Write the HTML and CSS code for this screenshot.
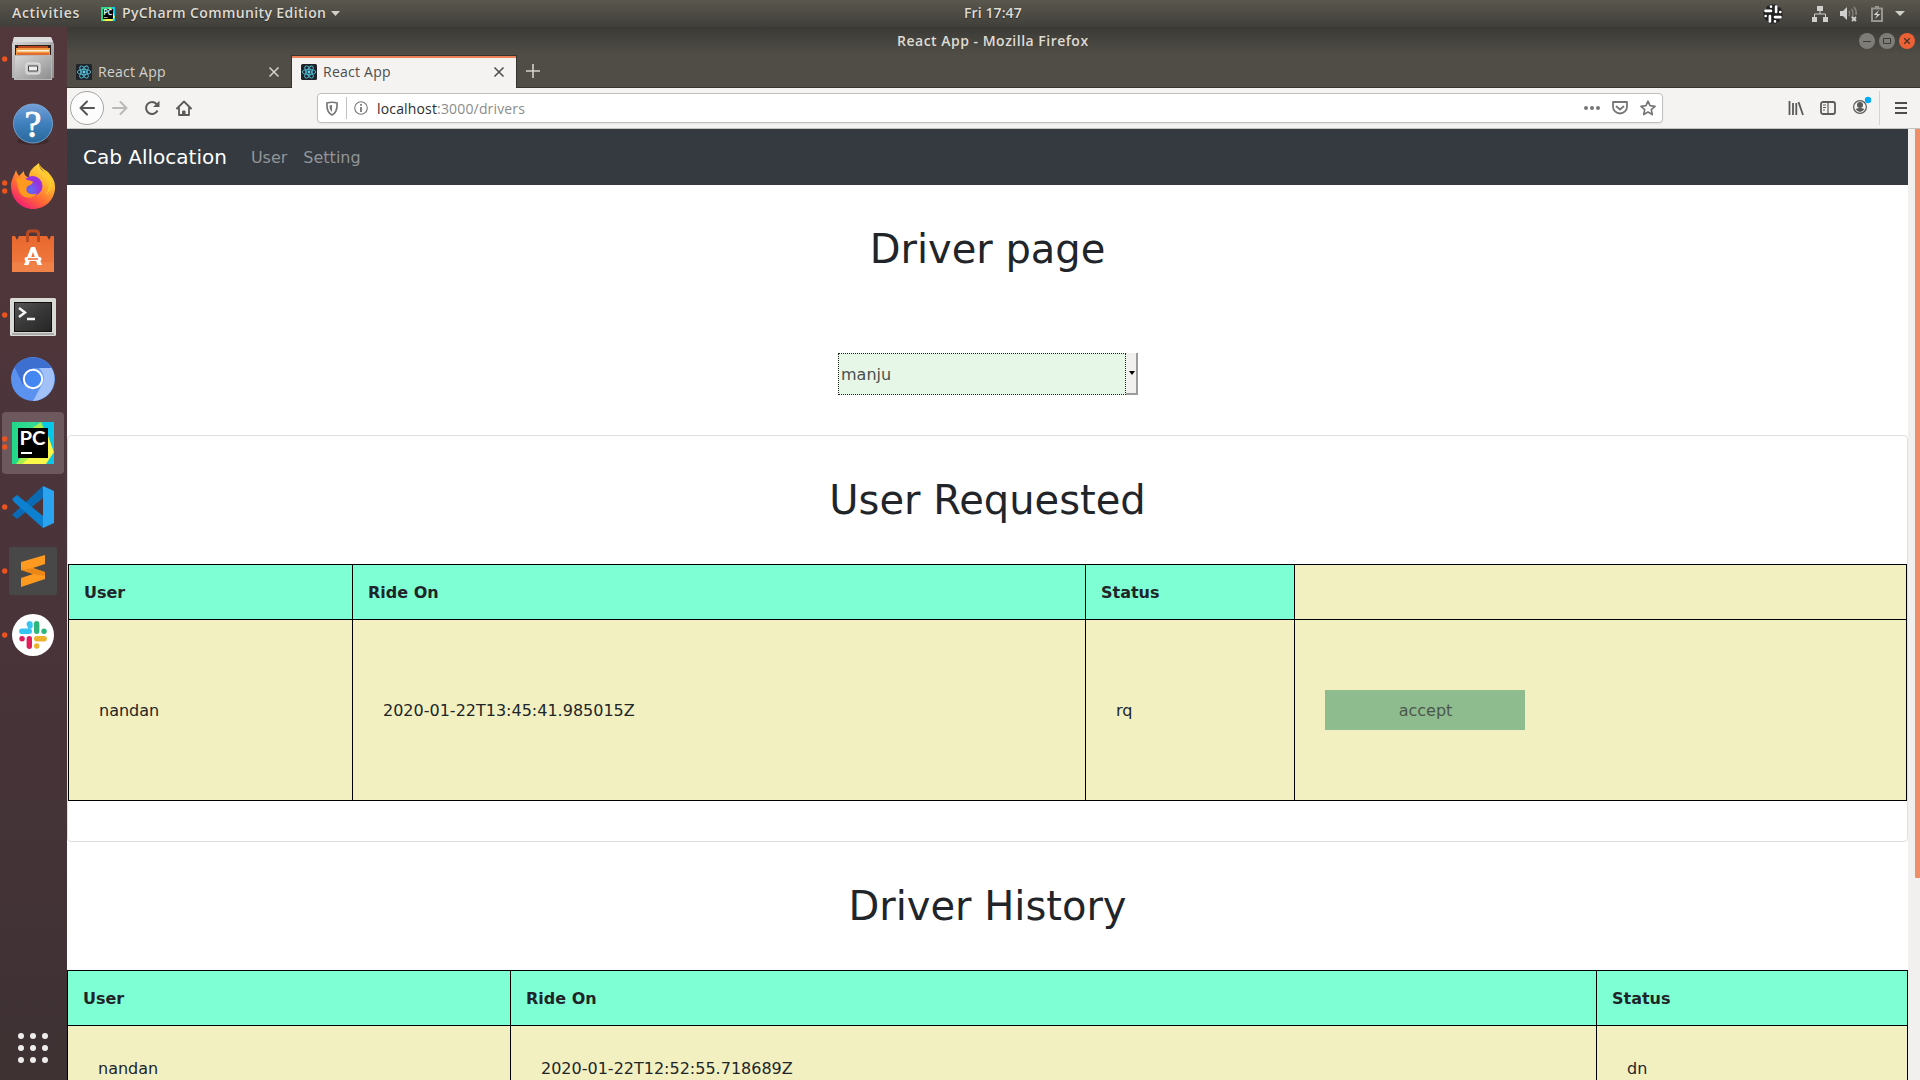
FILE: index.html
```html
<!DOCTYPE html>
<html lang="en">
<head>
<meta charset="utf-8">
<title>React App</title>
<link rel="stylesheet" href="styles.css">
</head>
<body>
<svg class="defs" width="0" height="0" aria-hidden="true">
  <defs>
    <linearGradient id="steel" x1="0" y1="0" x2="1" y2="1"><stop offset="0" stop-color="#d8d8d8"/><stop offset="1" stop-color="#8d8d8d"/></linearGradient>
    <linearGradient id="blue" x1="0" y1="0" x2="0" y2="1"><stop offset="0" stop-color="#74a0d8"/><stop offset=".5" stop-color="#3f80bd"/><stop offset="1" stop-color="#2a699b"/></linearGradient>
    <linearGradient id="fox" x1=".9" y1="0" x2=".2" y2="1"><stop offset="0" stop-color="#fff44f"/><stop offset=".35" stop-color="#ffb52e"/><stop offset=".65" stop-color="#ff6a35"/><stop offset="1" stop-color="#f0127c"/></linearGradient>
    <radialGradient id="globe" cx=".4" cy=".7"><stop offset="0" stop-color="#5b6df0"/><stop offset="1" stop-color="#9a32e0"/></radialGradient>
    <linearGradient id="bag" x1="0" y1="0" x2="0" y2="1"><stop offset="0" stop-color="#e9682d"/><stop offset="1" stop-color="#f07c43"/></linearGradient>
    <linearGradient id="term" x1="0" y1="0" x2="1" y2="1"><stop offset="0" stop-color="#555"/><stop offset=".5" stop-color="#383838"/><stop offset="1" stop-color="#262626"/></linearGradient>
    <linearGradient id="py" x1="0" y1="0" x2="1" y2="0"><stop offset="0" stop-color="#21d789"/><stop offset=".5" stop-color="#35dc92"/><stop offset="1" stop-color="#07c3f2"/></linearGradient>
    <symbol id="pycharm" viewBox="0 0 42 42">
      <path fill="url(#py)" d="M0 0h42v42H0z"/><path fill="#a9ee4e" d="M16 9 29 0l4 10zM4 42l8-10h25L18 42z"/><path fill="#fcf84a" d="m36 12 6 18-8 12H10l7-6z"/><path fill="#07c8e8" d="M31 0h11v30z"/>
      <path d="M6 6h30v30H6z"/><path fill="#fff" d="M9 30h11v2H9z"/>
      <text x="7.500" y="23" font-family="Lato, sans-serif" font-weight="700" font-size="19.500" fill="#fff" textLength="26" lengthAdjust="spacingAndGlyphs">PC</text>
    </symbol>
    <symbol id="react" viewBox="0 0 16 16">
      <rect width="16" height="16" rx="1.5" fill="#20242a"/>
      <g fill="none" stroke="#4fb9d2" stroke-width=".9"><ellipse cx="8" cy="8" rx="6.8" ry="2.6"/><ellipse cx="8" cy="8" rx="6.8" ry="2.6" transform="rotate(60 8 8)"/><ellipse cx="8" cy="8" rx="6.8" ry="2.6" transform="rotate(120 8 8)"/></g><circle cx="8" cy="8" r="1.4" fill="#61dafb"/>
    </symbol>
    <symbol id="x" viewBox="0 0 12 12"><path d="m1.5 1.5 9 9m0-9-9 9" stroke="currentColor" stroke-width="1.5" fill="none"/></symbol>
  </defs>
</svg>

<header class="topbar">
  <span class="top-activities">Activities</span>
  <svg class="top-app-icon" width="14" height="14"><use href="#pycharm"/></svg>
  <span class="top-app">PyCharm Community Edition</span>
  <svg class="top-caret" width="10" height="5"><path d="M0 0h9L4.500 5z" fill="#d0cfca"/></svg>
  <span class="top-clock">Fri 17:47</span>
  <div class="top-tray">
    <svg class="tray-slack" width="20" height="20" viewBox="0 0 20 20" fill="none" stroke-linecap="round"><g stroke="#222" stroke-width="4.500"><path d="M8.300 2.500V8M2.500 8h3M17.500 8.300H12M12 2.500v3M11.700 17.500V12M17.500 12h-3M2.500 11.700H8M8 17.500v-3M5.500 4h.1M16 5.500v.1M14.500 16h.1M4 14.500v.1"/></g><g stroke="#fff" stroke-width="2.600"><path d="M8 6.900H2.500M8 2.600v.1M13.100 8V2.500M17.400 8h-.1M12 13.100h5.500M12 17.400v-.1M6.900 12v5.500M2.600 12h.1"/></g></svg>
    <svg class="tray-net" width="16" height="16" viewBox="0 0 16 16"><path fill="#d0cfcb" d="M5 0h6v5H5zM0 11h5v5H0zM11 11h5v5h-5z"/><path d="M8 5v3M2.500 11V8h11v3" fill="none" stroke="#d0cfcb"/></svg>
    <svg class="tray-vol" width="18" height="16" viewBox="0 0 18 16"><path fill="#d0cfcb" d="M0 5h3l4-4v13l-4-4H0z"/><path d="M9 5q1.500 2.500 0 5M11.500 3q3 4.500 0 9M14 1q3 4 2 8" fill="none" stroke="#83827c" stroke-width="1.500"/><path d="m12 11 4 4m0-4-4 4" stroke="#d0cfcb" stroke-width="1.800"/></svg>
    <svg class="tray-bat" width="12" height="16" viewBox="0 0 12 16"><path d="M1 2.500h10V15H1zM4 1h4" fill="none" stroke="#969590" stroke-width="2"/><path fill="#d0cfcb" d="M8 4 2.500 9H6l-2 4 5.500-5H6z"/></svg>
    <svg width="10" height="5"><path d="M0 0h10L5 5z" fill="#d0cfca"/></svg>
  </div>
</header>

<div class="desktop">
  <nav class="dock">
    <svg class="dock-item" viewBox="0 0 67 64">
      <circle class="run" cx="4.700" cy="32" r="2.700"/>
      <path fill="url(#steel)" d="M14 10h37l3 7v34H12V17z"/><path fill="#dcdcdc" d="M14 10h37l2 5H13z"/><path fill="#2b2220" d="M15 18h36v12H15z"/><path fill="#b8481c" d="M18 19h30v5H18z"/><path fill="#f09a43" d="M16 21h34v8H16z"/><path fill="#fff1dc" d="M17 23h32v1.500H17z"/><path fill="#e06b2c" d="M17 26h32v2H17z"/>
      <path fill="#b8b8b8" d="M14 28h38v25H14z"/><path fill="url(#steel)" d="M15 29h36v23H15z"/><rect x="26" y="36" width="14" height="11" rx="2" fill="#c9c9c9" stroke="#e8e8e8"/><path d="M28.500 39h9v5h-9z" fill="#eee" stroke="#444"/>
    </svg>
    <svg class="dock-item" viewBox="0 0 67 64">
      <ellipse cx="33" cy="50" rx="16" ry="4" fill="#2b1c1f" opacity=".45"/><circle cx="33" cy="32.500" r="19.500" fill="url(#blue)" stroke="#7eb0e0" stroke-width=".8"/>
      <text x="33" y="45.500" text-anchor="middle" font-family="Liberation Serif, serif" font-size="38" fill="#fff" stroke="#fff" stroke-width=".8">?</text>
    </svg>
    <svg class="dock-item" viewBox="0 0 67 64">
      <circle class="run" cx="4.700" cy="28" r="2.700"/><circle class="run" cx="4.700" cy="36" r="2.700"/>
      <path fill="url(#fox)" d="M11 31c0-6 3-10 5-16 1 4 3 5 3 6l5-5c0 4 2 6 5 6 0-7 5-10 10-14 0 5 3 8 7 10l-.5-2c6 4 9.500 9 9.500 16 0 13-10 22-22 22S11 44 11 31z"/>
      <circle cx="32.500" cy="31" r="10" fill="url(#globe)"/><path fill="#ff9a20" d="M16 24c4-2 8-2 11 1 4 1 6 1 6 2-1 3-4 3-6 5-3 6 5 9 10 6-4 7-15 6-18-2z"/><path fill="#ffc928" d="M39 8c0 7 10 10 10 22 0 5-2 8-4 10 8-5 10-15 3-23-4-3-8-5-9-9z"/>
    </svg>
    <svg class="dock-item" viewBox="0 0 67 64">
      <path fill="url(#bag)" d="M12 17h3l2 4 2-4h28l2 4 2-4h3v36H12z"/><path fill="#f28950" opacity=".5" d="M12 43h42v10H12z"/><path d="M27.500 23v-8q0-3 3-3h5q3 0 3 3v8" fill="none" stroke="#b94a20" stroke-width="3"/>
      <path fill="#fff" d="m31 28-7 18h4.500L33 33l4.500 13H42l-7-18z"/><rect x="24.500" y="38" width="17" height="4" rx="2" fill="#fff"/><path d="M28 40h10" stroke="#e9682d" stroke-width="1.500"/>
    </svg>
    <svg class="dock-item" viewBox="0 0 67 64">
      <circle class="run" cx="4.700" cy="32" r="2.700"/><rect x="10" y="15" width="46" height="38" rx="1.500" fill="#d9d9d6"/><path fill="#aaa" d="M12 50h42v2H12z"/><path fill="#101010" d="M14 19h38v30H14z"/><path fill="url(#term)" d="M15 20h36v28H15z"/><path d="m19 25 6 4.500-6 4.500M27 36h8" fill="none" stroke="#f4f4f4" stroke-width="2.400"/>
    </svg>
    <svg class="dock-item" viewBox="0 0 67 64">
      <circle cx="33" cy="32" r="22" fill="#5b92f0"/><path fill="#3d6fd0" d="M14.500 20A22 22 0 0 1 51.500 21H33L23 38z"/><path fill="#a1c1f8" d="M51.500 21A22 22 0 0 1 33 54l9.500-17.500Q46 28 39 21z"/><circle cx="33" cy="32" r="9.200" fill="#4587f2" stroke="#fff" stroke-width="2"/>
    </svg>
    <svg class="dock-item" viewBox="0 0 67 64">
      <rect x="2" y="1" width="62" height="62" rx="4" fill="#6d585d"/><circle class="run" cx="4.700" cy="28" r="2.700"/><circle class="run" cx="4.700" cy="36" r="2.700"/><use href="#pycharm" x="12" y="11" width="42" height="42"/>
    </svg>
    <svg class="dock-item" viewBox="0 0 67 64">
      <circle class="run" cx="4.700" cy="32" r="2.700"/><path fill="#0a6bb4" d="m12 40 5 4 26-21V11L14 38z"/><path fill="#0d80cf" d="m12 24 5-4 26 21v12L14 27z"/><path fill="#2aa3f0" d="m43 11 11 5v32l-11 5z"/>
    </svg>
    <svg class="dock-item" viewBox="0 0 67 64">
      <circle class="run" cx="4.700" cy="32" r="2.700"/><rect x="9" y="8" width="48" height="48" rx="3" fill="#484848"/><path fill="#ff9a20" d="m21 23 24-7v9l-12 4 12 4v7l-24 8v-9l12-4-12-4z"/><path fill="#e17f12" d="m33 29 12 4v4l-12-2-12-4z" opacity=".7"/>
    </svg>
    <svg class="dock-item" viewBox="0 0 67 64">
      <circle class="run" cx="4.700" cy="32" r="2.700"/><circle cx="33" cy="32" r="21" fill="#fff"/>
      <g stroke-width="5.400" stroke-linecap="round"><path stroke="#36c5f0" d="M21.800 28.300h7.500M29.300 21h.1M30 21v2"/><path stroke="#2eb67d" d="M36.700 20.800v7.500M44 28.300h.1"/><path stroke="#ecb22e" d="M36.700 35.700h7.500M36.700 43v.1"/><path stroke="#e01e5a" d="M29.300 35.700v7.500M22 35.700h.1"/></g>
    </svg>
    <svg class="dock-grid" viewBox="0 0 67 64"><g fill="#eeecec"><circle cx="21" cy="20" r="3"/><circle cx="33" cy="20" r="3"/><circle cx="45" cy="20" r="3"/><circle cx="21" cy="32" r="3"/><circle cx="33" cy="32" r="3"/><circle cx="45" cy="32" r="3"/><circle cx="21" cy="44" r="3"/><circle cx="33" cy="44" r="3"/><circle cx="45" cy="44" r="3"/></g></svg>
  </nav>

  <section class="window">
    <div class="titlebar">
      <span class="win-title">React App - Mozilla Firefox</span>
      <div class="win-buttons">
        <svg width="16" height="16"><circle cx="8" cy="8" r="8" fill="#7d7c76"/><path d="M4 8.500h8" stroke="#3c3b37"/></svg>
        <svg width="16" height="16"><circle cx="8" cy="8" r="8" fill="#7d7c76"/><path d="M4.500 5.500h7v5h-7z" fill="none" stroke="#3c3b37"/></svg>
        <svg width="16" height="16"><circle cx="8" cy="8" r="8" fill="#ec6136"/><path d="m5.200 5.200 5.600 5.600m0-5.600-5.600 5.600" stroke="#49332a" stroke-width="1.300"/></svg>
      </div>
    </div>
    <div class="tabs">
      <div class="tab"><svg width="16" height="16"><use href="#react"/></svg><span class="tab-title">React App</span><svg class="tab-close" width="12" height="12"><use href="#x"/></svg></div>
      <div class="tab tab-active"><svg width="16" height="16"><use href="#react"/></svg><span class="tab-title">React App</span><svg class="tab-close" width="12" height="12"><use href="#x"/></svg></div>
      <svg class="tab-new" width="14" height="14"><path d="M7 0v14M0 7h14" stroke="#d3d1ca" stroke-width="1.600"/></svg>
    </div>
    <div class="toolbar">
      <div class="nav-buttons">
        <div class="nav-back"><svg width="16" height="16" viewBox="0 0 16 16" fill="none" stroke="#555" stroke-width="2" stroke-linecap="round" stroke-linejoin="round"><path d="M15 8H1.500M8 1.500 1.500 8 8 14.500"/></svg></div>
        <svg width="16" height="16" viewBox="0 0 16 16" fill="none" stroke="#bbb9b6" stroke-width="2" stroke-linecap="round" stroke-linejoin="round"><path d="M1 8h13.500M8.500 2l6 6-6 6"/></svg>
        <svg width="16" height="16" viewBox="0 0 16 16"><path d="M13.500 10.500A6 6 0 1 1 12.500 4l1.500 2" fill="none" stroke="#5a5a59" stroke-width="2"/><path fill="#5a5a59" d="M15.500.8V7H9z"/></svg>
        <svg width="16" height="16" viewBox="0 0 16 16" fill="none" stroke="#5a5a59" stroke-width="1.800" stroke-linejoin="round" stroke-linecap="round"><path d="M1 8.500 8 1.500l7 7M3 8v7h10V8"/><path d="M7 11h2v4H7z" fill="#5a5a59" stroke-width="1"/></svg>
      </div>
      <div class="urlbar">
        <svg width="12" height="15" viewBox="0 0 12 15"><path d="M1 2q5-1.500 10 0c.5 6-1 10-5 12C2 12 .500 8 1 2z" fill="none" stroke="#77777a" stroke-width="1.700"/><path d="M6 4v7q-2.500-2-2.500-6.500z" fill="#77777a"/></svg>
        <i class="url-sep"></i>
        <svg width="14" height="14" viewBox="0 0 14 14"><circle cx="7" cy="7" r="6.300" fill="none" stroke="#77777a" stroke-width="1.100"/><path d="M7 6v5M7 3v1.700" stroke="#77777a" stroke-width="1.800"/></svg>
        <span class="url">localhost<span class="url-dim">:3000/drivers</span></span>
        <div class="url-actions">
          <svg width="16" height="16" fill="#77777a"><circle cx="2" cy="8" r="2"/><circle cx="8" cy="8" r="2"/><circle cx="14" cy="8" r="2"/></svg>
          <svg width="16" height="16" viewBox="0 0 16 16" fill="none" stroke="#77777a" stroke-width="1.800" stroke-linecap="round" stroke-linejoin="round"><path d="M1 2h14v4.500a7 7 0 0 1-14 0z"/><path d="m4.500 6.500 3.500 3 3.500-3"/></svg>
          <svg width="16" height="16" viewBox="0 0 16 16" fill="none" stroke="#77777a" stroke-width="1.700" stroke-linejoin="round"><path d="m8 1.200 2 4.500 5 .6-3.700 3.300 1 5L8 12.100l-4.300 2.500 1-5L1 6.300l5-.6z"/></svg>
        </div>
      </div>
      <div class="tools">
        <svg width="16" height="16" viewBox="0 0 16 16" stroke="#5a5a59" stroke-width="1.800"><path d="M1.500 1v14M5 3v12M8.300 3v12M10.500 2l4.500 13"/></svg>
        <svg width="16" height="16" viewBox="0 0 16 16" fill="none" stroke="#5a5a59"><rect x="1" y="2" width="14" height="12" rx="2" stroke-width="1.800"/><path d="M8 2v12" stroke-width="1.200"/><path d="M3 5h3M3 7.500h3M3 10h2"/></svg>
        <svg class="account" width="20" height="22" viewBox="0 0 20 22"><circle cx="8" cy="13" r="6.400" fill="none" stroke="#5a5a59" stroke-width="1.200"/><circle cx="8" cy="11" r="3" fill="#5a5a59"/><path fill="#5a5a59" d="M3.500 15q4.500-2 9 0-4.500 6-9 0z"/><circle cx="16" cy="6" r="3.200" fill="#00adf5"/></svg>
        <i class="tool-sep"></i>
        <svg width="12" height="12" stroke="#4c4c4b" stroke-width="2"><path d="M0 1h12M0 6h12M0 11h12"/></svg>
      </div>
    </div>

    <div class="viewport">
      <main class="page">
        <nav class="navbar"><a class="brand">Cab Allocation</a><a class="nav-link">User</a><a class="nav-link">Setting</a></nav>
        <h1 class="heading">Driver page</h1>
        <div class="picker"><div class="select"><span class="select-value">manju</span><span class="select-arrow"><svg width="6" height="4"><path d="M0 0h6L3 4z"/></svg></span></div></div>
        <section class="card">
          <h1 class="heading">User Requested</h1>
          <table class="grid requests">
            <colgroup><col class="r-user"><col class="r-ride"><col class="r-status"><col></colgroup>
            <tr><th>User</th><th>Ride On</th><th>Status</th><td></td></tr>
            <tr class="request"><td>nandan</td><td>2020-01-22T13:45:41.985015Z</td><td>rq</td><td><button class="accept">accept</button></td></tr>
          </table>
        </section>
        <h1 class="heading">Driver History</h1>
        <table class="grid history">
          <colgroup><col class="h-user"><col class="h-ride"><col></colgroup>
          <tr><th>User</th><th>Ride On</th><th>Status</th></tr>
          <tr><td>nandan</td><td>2020-01-22T12:52:55.718689Z</td><td>dn</td></tr>
        </table>
      </main>
      <div class="scrollbar"><div class="thumb"></div></div>
    </div>
  </section>
</div>
</body>
</html>
```
FILE: styles.css
```css
* { box-sizing: border-box; }
body { margin: 0; width: 1920px; height: 1080px; overflow: hidden; display: flex; flex-direction: column; background: #fff; font-family: "Open Sans", "Noto Sans", sans-serif; }
svg { display: block; flex: none; }
.defs { position: absolute; }

/* system bar */
.topbar { flex: none; height: 27px; display: flex; align-items: center; color: #dfdbd2; font-size: 14px; font-weight: 600; line-height: 26px; white-space: nowrap; background: linear-gradient(#5a574e, #403f3a); text-shadow: 0 1px 1px #2a2927; }
.topbar > span { padding-bottom: 1px; }
.top-activities { width: 89px; padding-left: 12px; letter-spacing: .65px; }
.top-app-icon { margin-left: 12px; }
.top-app { width: 204px; margin-left: 7px; letter-spacing: .38px; }
.top-caret { margin-left: 5px; }
.top-clock { margin-left: 623px; width: 62px; letter-spacing: .1px; }
.top-tray { margin-left: auto; padding-right: 15px; display: flex; align-items: center; }
.tray-slack { margin-left: 1px; }
.tray-net { margin-left: 29px; }
.tray-vol { margin-left: 12px; }
.tray-bat { margin-left: 13px; margin-right: 12px; }

.desktop { flex: 1; min-height: 0; display: flex; }
.dock { width: 67px; flex: none; display: flex; flex-direction: column; background: linear-gradient(#52373b, #49343a 55%, #3e3233); }
.dock-item { width: 67px; height: 64px; }
.run { fill: #e95420; }
.dock-grid { width: 67px; height: 64px; margin-top: auto; }

.window { flex: 1; min-width: 0; display: flex; flex-direction: column; }
.titlebar { flex: none; height: 28px; display: flex; align-items: center; justify-content: flex-end; background: linear-gradient(#3b3a36, #504d46); color: #dfdbd2; font-size: 14px; font-weight: 600; line-height: 28px; padding-bottom: 1px; }
.win-title { width: 194px; margin-right: 768px; white-space: nowrap; letter-spacing: .5px; }
.win-buttons { display: flex; gap: 4px; padding-right: 5px; }
.tabs { flex: none; height: 33px; display: flex; background: #504d46; box-shadow: inset 0 -1px #35342f; }
.tab { width: 225px; display: flex; align-items: center; padding-left: 9px; padding-top: 1px; color: #d5d3cd; font-size: 14px; }
.tab-title { margin-left: 6px; width: 69px; padding-bottom: 2px; white-space: nowrap; letter-spacing: .25px; }
.tab-close { margin-left: 101px; }
.tab-active { width: 226px; margin-left: -1px; padding-left: 9px; border: 1px solid #35342f; border-bottom: 0; padding-top: 0; background: #f4f3f2; color: #4d4d4b; box-shadow: inset 0 2px #ee8058; }
.tab-new { margin: 9px 0 0 9px; }
.toolbar { flex: none; height: 41px; display: flex; align-items: center; background: #f4f3f1; border-bottom: 1px solid #c4c2bf; }
.nav-buttons { display: flex; align-items: center; gap: 16px; padding-left: 3px; width: 250px; }
.nav-back { width: 34px; height: 34px; margin-right: -8px; border: 1px solid #a5a4a1; border-radius: 50%; background: #fcfcfc; display: grid; place-items: center; }
.urlbar { width: 1346px; height: 30px; border: 1px solid #c2c0bd; border-radius: 4px; background: #fff; display: flex; align-items: center; padding-left: 8px; box-shadow: 0 1px 2px #0001; }
.url-sep { width: 1px; height: 22px; margin: 0 7px 0 8px; background: #c2c1bf; }
.url { margin-left: 9px; padding-top: 1px; font-size: 14px; line-height: 27px; letter-spacing: .16px; color: #2c2c2c; }
.url-dim { color: #8c8c8c; }
.url-actions { display: flex; gap: 12px; margin-left: auto; padding-right: 6px; }
.tools { flex: 1; display: flex; align-items: center; padding-left: 125px; gap: 16px; }
.account { margin: -6px -4px 0 0; }
.tool-sep { width: 1px; height: 34px; margin: 0 -1px 0 -5px; background: #d5d3d0; }

/* app page */
.viewport { flex: 1; min-height: 0; display: flex; overflow: hidden; }
.page { width: 1841px; height: 951px; overflow: hidden; font: 16px/24px "DejaVu Sans", sans-serif; color: #212529; }
.scrollbar { width: 12px; padding-left: 7px; background: #f1f0ef; }
.thumb { height: 749px; background: #f08e69; border-radius: 0 0 0 1px; }
.navbar { height: 56px; padding: 0 16px; display: flex; align-items: center; background: #343a40; }
.brand { font-size: 20px; color: #fff; margin-right: 24px; }
.nav-link { color: #929598; margin-right: 16px; padding-top: 2px; }
.heading { margin: 0; padding: 40px 0; font-size: 40px; line-height: 48px; font-weight: 400; text-align: center; }
.picker { height: 122px; padding-top: 40px; display: flex; justify-content: center; }
.select { width: 300px; height: 42px; display: flex; color: #4a504c; margin-left: 1px; }
.select-value { width: 288px; padding-left: 2px; line-height: 42px; border: 1px dotted #222; background: #e6f6e7; }
.select-arrow { width: 12px; display: grid; place-items: center; padding-left: 1px; background: #f1f0ee; border-right: 2px solid #9c9c9c; border-bottom: 2px solid #9c9c9c; }
.card { height: 407px; border: 1px solid #dfdfdf; border-radius: 4px; }
.grid { border-collapse: separate; border-spacing: 0; table-layout: fixed; width: 100%; border: solid #000; border-width: 1px 0 0 1px; background: #f2f0c1; }
.grid th, .grid td { border: solid #000; border-width: 0 1px 1px 0; text-align: left; }
.grid th { height: 55px; padding: 16px 15px 14px; background: #7fffd4; font-weight: 700; }
.grid td { height: 85px; padding: 31px 30px 29px; }
.grid tr:first-child td { height: 55px; padding: 0; }
.grid .request td { height: 181px; }
.grid .request td:last-child { padding: 30px; }
.r-user { width: 284px; }
.r-ride { width: 733px; }
.r-status { width: 209px; }
.h-user { width: 443px; }
.h-ride { width: 1086px; }
.accept { display: block; width: 200px; height: 40px; border: 0; padding: 2px 0 0 1px; background: #8fbc8f; color: #4b574b; font: inherit; }
```
